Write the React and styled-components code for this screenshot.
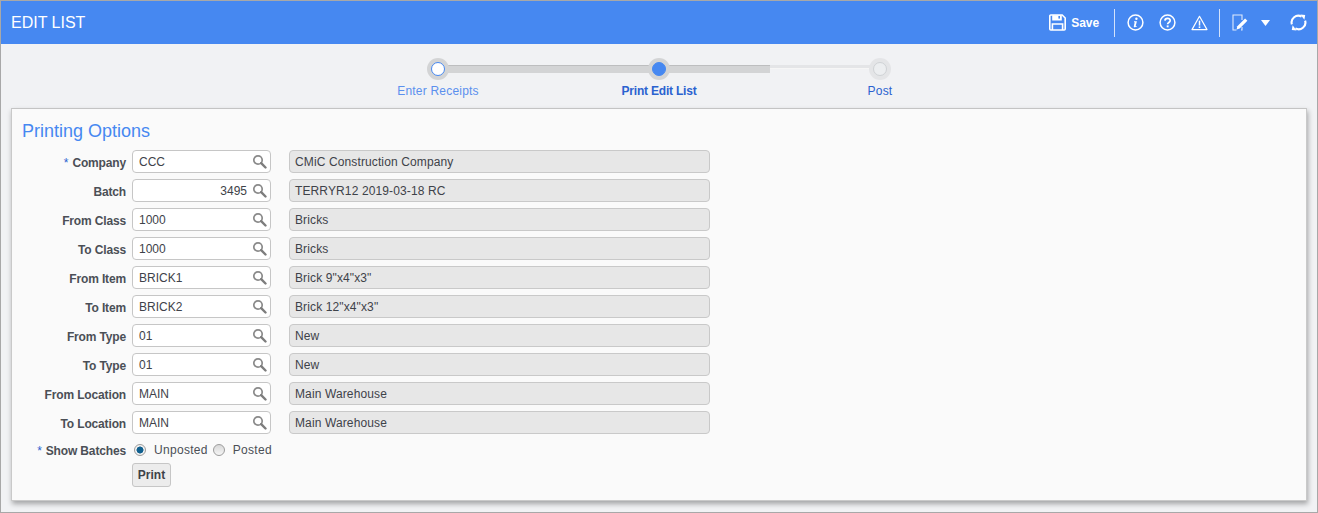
import React from "react";
import styled, { createGlobalStyle } from "styled-components";

const GlobalStyle = createGlobalStyle`
  html, body { margin: 0; padding: 0; }
  body {
    font-family: "Liberation Sans", Arial, sans-serif;
    background: #f1f2f4;
  }
`;

const Frame = styled.div`
  box-sizing: border-box;
  width: 1318px;
  height: 513px;
  border: 1px solid #a8a8a8;
  background: #f1f2f4;
  overflow: hidden;
`;

const Header = styled.div`
  height: 43px;
  background: #4688f1;
  display: flex;
  align-items: center;
  padding: 0 10px;
  color: #fff;
`;

const Title = styled.div`
  font-size: 16px;
  flex: 1;
  padding-top: 1px;
`;

const SaveButton = styled.div`
  display: flex;
  align-items: center;
  gap: 5px;
  font-size: 12px;
  font-weight: 700;
  letter-spacing: -0.1px;
  margin-right: 15px;
`;

const Divider = styled.div`
  width: 1px;
  height: 28px;
  background: #d3e2fb;
  margin-right: ${(p) => p.$after}px;
`;

const IconSlot = styled.div`
  display: flex;
  margin-right: ${(p) => p.$gap}px;
`;

const Stepper = styled.div`
  position: relative;
  display: flex;
  justify-content: center;
  height: 64px;
`;

const Track = styled.div`
  position: absolute;
  left: 437px;
  top: 21px;
  width: 442px;
  height: 3px;
  background: #e4e5e7;
  border-bottom: 1px solid #f6f6f6;
`;

const TrackFill = styled.div`
  position: absolute;
  left: 437px;
  top: 21px;
  width: 332px;
  height: 8px;
  background: #d3d4d5;
  border-top: 1px solid #bdbebf;
  box-sizing: border-box;
`;

const Step = styled.div`
  position: relative;
  width: 221px;
  display: flex;
  flex-direction: column;
  align-items: center;
  padding-top: 14px;
`;

const StepRing = styled.div`
  box-sizing: border-box;
  width: 22px;
  height: 22px;
  border-radius: 50%;
  background: ${(p) => (p.$state === "todo" ? "#e4e5e7" : "#d3d4d5")};
  display: flex;
  align-items: center;
  justify-content: center;
`;

const StepDot = styled.div`
  box-sizing: border-box;
  width: 14px;
  height: 14px;
  border-radius: 50%;
  background: ${(p) =>
    p.$state === "done" ? "#fff" : p.$state === "active" ? "#4688f1" : "#eceef0"};
  border: 1px solid
    ${(p) =>
      p.$state === "done" ? "#4688f1" : p.$state === "active" ? "#4688f1" : "#cfd2d5"};
`;

const StepLabel = styled.div`
  margin-top: 4px;
  font-size: 12px;
  font-weight: ${(p) => (p.$state === "active" ? 700 : 400)};
  letter-spacing: ${(p) => (p.$state === "active" ? "-0.2px" : "0.2px")};
  color: ${(p) => (p.$state === "done" ? "#5b90ee" : "#2b62d0")};
`;

const Panel = styled.div`
  box-sizing: border-box;
  margin: 0 10px;
  height: 393px;
  background: #fafafa;
  border: 1px solid #c9c9c9;
  border-top-color: #c4c4c4;
  box-shadow: 1px 3px 5px rgba(0, 0, 0, 0.32);
  padding: 11px 10px 0 10px;
`;

const PanelTitle = styled.div`
  font-size: 18px;
  color: #4688f1;
  line-height: 23px;
  margin-bottom: 7px;
`;

const Form = styled.div`
  display: flex;
  flex-direction: column;
  gap: 6px;
`;

const Row = styled.div`
  display: flex;
  align-items: center;
  height: 23px;
  margin-top: ${(p) => p.$shift || 0}px;
`;

const Label = styled.div`
  width: 104px;
  text-align: right;
  font-size: 12px;
  font-weight: 700;
  letter-spacing: -0.15px;
  color: #4b4f56;
  margin-top: 2px;
`;

const Required = styled.span`
  color: #2b62d0;
  margin-right: 4px;
  font-weight: 400;
`;

const Lookup = styled.div`
  box-sizing: border-box;
  width: 139px;
  height: 23px;
  margin-left: 6px;
  background: #fff;
  border: 1px solid #c6c6c6;
  border-radius: 4px;
  display: flex;
  align-items: center;
  padding: 0 3px 0 6px;
  font-size: 12px;
  color: #3e4249;
`;

const LookupValue = styled.div`
  flex: 1;
  text-align: ${(p) => (p.$right ? "right" : "left")};
  padding-right: ${(p) => (p.$right ? "5px" : "0")};
`;

const Description = styled.div`
  box-sizing: border-box;
  width: 421px;
  height: 23px;
  margin-left: 18px;
  background: #e7e7e7;
  border: 1px solid #c9c9c9;
  border-radius: 4px;
  display: flex;
  align-items: center;
  padding: 0 5px;
  font-size: 12px;
  letter-spacing: 0.12px;
  color: #3e4249;
`;

const RadioGroup = styled.div`
  display: flex;
  align-items: center;
  margin-left: 8px;
  font-size: 12px;
  letter-spacing: 0.3px;
  color: #4b4f56;
  margin-top: 1px;
`;

const Radio = styled.div`
  box-sizing: border-box;
  width: 12px;
  height: 12px;
  border-radius: 50%;
  border: 1px solid #9c9c9c;
  background: ${(p) =>
    p.$on
      ? "radial-gradient(circle, #10608f 0 3.2px, #f2f2f2 3.8px)"
      : "linear-gradient(#d8d8d8, #f5f5f5)"};
  margin-right: ${(p) => p.$space}px;
`;

const RadioText = styled.span`
  margin-right: ${(p) => p.$space}px;
`;

const PrintRow = styled.div`
  padding-left: 110px;
  margin-top: -4px;
`;

const PrintButton = styled.div`
  box-sizing: border-box;
  width: 39px;
  height: 24px;
  background: #ececec;
  border: 1px solid #c6c6c6;
  border-radius: 3px;
  display: flex;
  align-items: center;
  justify-content: center;
  font-size: 12px;
  font-weight: 700;
  color: #3e4249;
`;

const SaveIcon = () => (
  <svg width="17" height="17" viewBox="0 0 17 17" fill="none" stroke="#fff" strokeWidth="1.6">
    <path d="M1.8 1h11.4l3 3v11a1 1 0 0 1-1 1H1.8a1 1 0 0 1-1-1V2a1 1 0 0 1 1-1z" />
    <path d="M4 1.2v4.6h8V1.2" fill="#fff" />
    <path d="M3.4 16v-6h10.2v6" />
    <rect x="9.4" y="2" width="1.6" height="2.6" fill="#4688f1" stroke="none" />
  </svg>
);

const InfoIcon = () => (
  <svg width="17" height="17" viewBox="0 0 17 17" fill="none">
    <circle cx="8.5" cy="8.5" r="7.4" stroke="#fff" strokeWidth="1.5" />
    <circle cx="9.4" cy="4.7" r="1.2" fill="#fff" />
    <path d="M7 7.3h2.9l-1.2 4.6c-.1.5.3.6 1.3.2l-.2.7c-1 .6-3.3 1-3-.6l.9-3.9H7z" fill="#fff" />
  </svg>
);

const HelpIcon = () => (
  <svg width="17" height="17" viewBox="0 0 17 17" fill="none">
    <circle cx="8.5" cy="8.5" r="7.4" stroke="#fff" strokeWidth="1.5" />
    <path d="M5.9 6.6c.1-3.1 5.4-3.1 5.3 0 0 2-2.6 1.9-2.6 3.7" stroke="#fff" strokeWidth="1.7" />
    <rect x="7.7" y="11.4" width="1.9" height="1.9" fill="#fff" />
  </svg>
);

const WarnIcon = () => (
  <svg width="17" height="16" viewBox="0 0 17 16" fill="none">
    <path d="M8.5 1.3L16 14.6H1z" stroke="#fff" strokeWidth="1.2" strokeLinejoin="round" />
    <path d="M8.5 5.6v5" stroke="#fff" strokeWidth="1.5" />
    <rect x="7.7" y="11.4" width="1.6" height="1.6" fill="#fff" />
  </svg>
);

const EditIcon = () => (
  <svg width="16" height="17" viewBox="0 0 16 17" fill="none">
    <path d="M10 6V1H1v15h3.5M9 16h1v-3" stroke="#dfe9fb" strokeWidth="1.1" />
    <path d="M4.6 15.6l.7-3.4 7.8-7.7 2.3 2.3-7.7 7.8z" fill="#fff" />
  </svg>
);

const CaretIcon = () => (
  <svg width="9" height="6" viewBox="0 0 9 6">
    <path d="M0 0h9L4.5 6z" fill="#fff" />
  </svg>
);

const RefreshIcon = () => (
  <svg width="17" height="17" viewBox="0 0 17 17" fill="none">
    <path d="M1.9 10.4A6.7 6.7 0 0 1 11.6 2.6" stroke="#fff" strokeWidth="2.1" />
    <path d="M15.1 6.6A6.7 6.7 0 0 1 5.4 14.4" stroke="#fff" strokeWidth="2.1" />
    <path d="M10.4 .6l4.8.4-.8 4.8zM6.6 16.4l-4.8-.4.8-4.8z" fill="#fff" />
  </svg>
);

const SearchIcon = () => (
  <svg width="15" height="15" viewBox="0 0 15 15" fill="none">
    <circle cx="6" cy="6" r="4.2" stroke="#8a8a8a" strokeWidth="1.7" />
    <path d="M9.2 9.2l4.3 4.3" stroke="#7d7d7d" strokeWidth="2.4" strokeLinecap="round" />
  </svg>
);

const STEPS = [
  { name: "Enter Receipts", state: "done" },
  { name: "Print Edit List", state: "active" },
  { name: "Post", state: "todo" },
];

const FIELDS = [
  { label: "Company", value: "CCC", desc: "CMiC Construction Company", required: true },
  { label: "Batch", value: "3495", desc: "TERRYR12 2019-03-18 RC", right: true },
  { label: "From Class", value: "1000", desc: "Bricks" },
  { label: "To Class", value: "1000", desc: "Bricks" },
  { label: "From Item", value: "BRICK1", desc: 'Brick 9"x4"x3"' },
  { label: "To Item", value: "BRICK2", desc: 'Brick 12"x4"x3"' },
  { label: "From Type", value: "01", desc: "New" },
  { label: "To Type", value: "01", desc: "New" },
  { label: "From Location", value: "MAIN", desc: "Main Warehouse" },
  { label: "To Location", value: "MAIN", desc: "Main Warehouse" },
];

export default function App() {
  return (
    <Frame>
      <GlobalStyle />
      <Header>
        <Title>EDIT LIST</Title>
        <SaveButton>
          <SaveIcon />
          Save
        </SaveButton>
        <Divider $after={12} />
        <IconSlot $gap={15}><InfoIcon /></IconSlot>
        <IconSlot $gap={15}><HelpIcon /></IconSlot>
        <IconSlot $gap={11}><WarnIcon /></IconSlot>
        <Divider $after={12} />
        <IconSlot $gap={13}><EditIcon /></IconSlot>
        <IconSlot $gap={20}><CaretIcon /></IconSlot>
        <IconSlot $gap={0}><RefreshIcon /></IconSlot>
      </Header>
      <Stepper>
        <Track />
        <TrackFill />
        {STEPS.map((s) => (
          <Step key={s.name}>
            <StepRing $state={s.state}>
              <StepDot $state={s.state} />
            </StepRing>
            <StepLabel $state={s.state}>{s.name}</StepLabel>
          </Step>
        ))}
      </Stepper>
      <Panel>
        <PanelTitle>Printing Options</PanelTitle>
        <Form>
          {FIELDS.map((f) => (
            <Row key={f.label}>
              <Label>
                {f.required && <Required>*</Required>}
                {f.label}
              </Label>
              <Lookup>
                <LookupValue $right={f.right}>{f.value}</LookupValue>
                <SearchIcon />
              </Lookup>
              <Description>{f.desc}</Description>
            </Row>
          ))}
          <Row $shift={-2}>
            <Label>
              <Required>*</Required>
              Show Batches
            </Label>
            <RadioGroup>
              <Radio $on $space={8} />
              <RadioText $space={5}>Unposted</RadioText>
              <Radio $space={8} />
              <RadioText $space={0}>Posted</RadioText>
            </RadioGroup>
          </Row>
          <PrintRow>
            <PrintButton>Print</PrintButton>
          </PrintRow>
        </Form>
      </Panel>
    </Frame>
  );
}
